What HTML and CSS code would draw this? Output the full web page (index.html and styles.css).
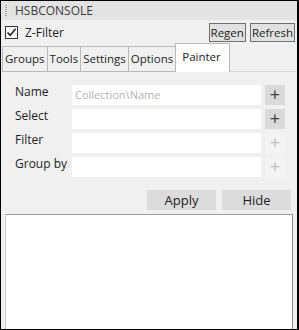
FILE: index.html
```html
<!DOCTYPE html>
<html>
  <head>
    <title>HSBCONSOLE</title>
    <link rel="stylesheet" href="styles.css">
  </head>
  <body>
    <div class="panel">
      <div class="titlebar">
        <span class="grip"></span>
        <span class="title">HSBCONSOLE</span>
      </div>

      <div class="toolbar">
        <label class="check">
          <span class="box">
            <svg width="11" height="11" viewBox="0 0 11 11"><path d="M1.5 5.5 L4.2 8.3 L9.6 1.8" fill="none" stroke="#222" stroke-width="1.6"/></svg>
          </span>
          Z-Filter
        </label>
        <div class="spacer"></div>
        <button class="tool-btn">Regen</button>
        <button class="tool-btn">Refresh</button>
      </div>

      <div class="tabs">
        <div class="tab">Groups</div>
        <div class="tab">Tools</div>
        <div class="tab">Settings</div>
        <div class="tab">Options</div>
        <div class="tab active">Painter</div>
        <div class="tab-fill"></div>
      </div>

      <div class="page">
        <div class="form">
          <label>Name</label>
          <div class="field placeholder">Collection\Name</div>
          <div class="plus">+</div>

          <label>Select</label>
          <div class="field"></div>
          <div class="plus">+</div>

          <label>Filter</label>
          <div class="field"></div>
          <div class="plus off">+</div>

          <label>Group by</label>
          <div class="field"></div>
          <div class="plus off">+</div>
        </div>

        <div class="actions">
          <button class="flat-btn">Apply</button>
          <button class="flat-btn">Hide</button>
        </div>

        <div class="output"></div>
      </div>
    </div>
  </body>
</html>
```

FILE: styles.css
```css
html, body {
  margin: 0;
  padding: 0;
}

body {
  font-family: "Open Sans", "Noto Sans", sans-serif;
  font-size: 11.5px;
  color: #1e1e1e;
}

.panel {
  width: 299px;
  height: 330px;
  box-sizing: border-box;
  border: 1px solid #000;
  border-right-width: 2px;
  background: #f0f0f0;
  overflow: hidden;
  display: flex;
  flex-direction: column;
}

.titlebar {
  height: 19px;
  background: #e3e3e3;
  display: flex;
  align-items: center;
  padding-left: 4px;
}

.grip {
  width: 2px;
  height: 11px;
  margin-right: 8px;
  background: repeating-linear-gradient(to bottom, #a6a6a6 0 1px, transparent 1px 2px);
}

.title {
  color: #3c3c3c;
  font-size: 12px;
}

.toolbar {
  height: 21px;
  display: flex;
  align-items: center;
  padding: 2px 2px 0 4px;
  font-size: 12px;
}

.check {
  display: flex;
  align-items: center;
  gap: 7px;
}

.box {
  width: 11px;
  height: 11px;
  border: 1px solid #333;
  background: #fff;
  display: flex;
}

.spacer {
  flex: 1;
}

.tool-btn {
  font: inherit;
  font-size: 11.5px;
  height: 19px;
  margin-left: 4px;
  padding: 0 1px;
  border: 1px solid #707070;
  background: #e1e1e1;
  color: #1e1e1e;
  line-height: 16px;
}

.tabs {
  display: flex;
  align-items: flex-end;
  height: 29px;
  padding-left: 1px;
}

.tab {
  height: 26px;
  line-height: 23px;
  padding: 0 2px;
  box-sizing: border-box;
  border: 1px solid #b9b9b9;
  border-left: none;
  background: #f0f0f0;
}

.tab:first-child {
  border-left: 1px solid #b9b9b9;
}

.tab.active {
  height: 29px;
  line-height: 25px;
  padding: 0 8px 0 6px;
  background: #fff;
  border-bottom: none;
  margin-left: -1px;
  border-left: 1px solid #b9b9b9;
}

.tab-fill {
  flex: 1;
  border-bottom: 1px solid #d9d9d9;
}

.page {
  flex: 1;
  display: flex;
  flex-direction: column;
  padding: 13px 4px 0 4px;
  min-height: 0;
}

.form {
  display: grid;
  grid-template-columns: 53px 1fr 20px;
  column-gap: 4px;
  row-gap: 4px;
  padding: 0 8px 0 10px;
}

.form label {
  line-height: 14px;
  height: 20px;
  font-size: 12px;
  color: #1e1e1e;
}

.field {
  height: 20px;
  background: #fff;
  line-height: 20px;
  padding-left: 3px;
}

.placeholder {
  color: #b4b4b4;
  font-size: 11px;
}

.plus {
  height: 20px;
  background: #dadada;
  color: #404040;
  font-size: 18px;
  line-height: 19px;
  text-align: center;
}

.plus.off {
  background: #f3f3f3;
  color: #c0c0c0;
}

.actions {
  display: flex;
  justify-content: flex-end;
  gap: 6px;
  padding: 13px 2px 4px 0;
}

.flat-btn {
  font: inherit;
  font-size: 13px;
  width: 69px;
  height: 20px;
  padding: 0;
  border: none;
  background: #dcdcdc;
  color: #1e1e1e;
}

.output {
  flex: 1;
  background: #fff;
  border: 1px solid #9c9c9c;
  border-left-color: #d0d0d0;
  border-right-color: #8a8a8a;
  margin-bottom: -4px;
}
```
